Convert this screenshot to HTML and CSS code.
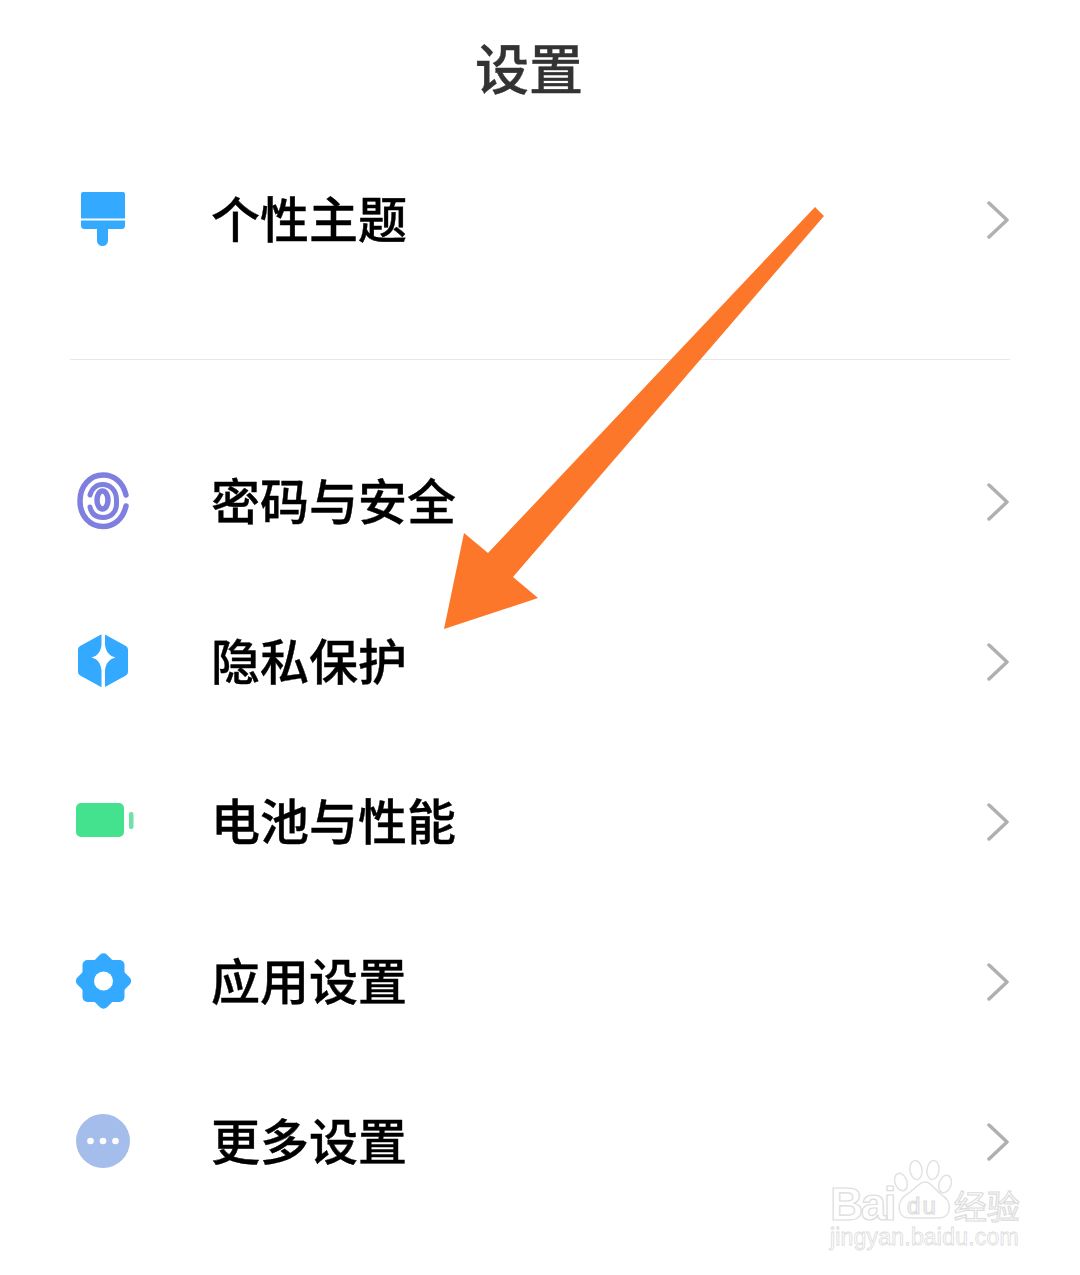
FILE: index.html
```html
<!DOCTYPE html>
<html lang="zh-CN">
<head>
  <meta charset="utf-8">
  <title>设置</title>
  <link rel="stylesheet" href="styles.css">
</head>
<body>
<main class="page">
  <header class="title-bar"><h1>设置</h1></header>

  <ul class="group">
    <li class="row">
      <svg class="icon" viewBox="0 0 66 66">
        <path fill="#33a9ff" d="M13 5h40a2 2 0 0 1 2 2v24.500H11V7a2 2 0 0 1 2-2z"/>
        <path fill="#33a9ff" d="M11 33.500h44v5a3.500 3.500 0 0 1-3.500 3.500H38v11.500a5.500 5.500 0 0 1-11 0V42H14.500a3.500 3.500 0 0 1-3.500-3.500z"/>
      </svg>
      <span class="label">个性主题</span>
      <svg class="chevron" viewBox="0 0 24 38"><path d="M3 2l18 17L3 36"/></svg>
    </li>
  </ul>

  <hr class="divider">

  <ul class="group">
    <li class="row">
      <svg class="icon" viewBox="0 0 66 66" fill="none" stroke="#7f7fe0" stroke-linecap="round">
        <path stroke-width="5.500" d="M56 26C53 13 44 6 33 6C20 6 10 17 10 32C10 47 20 57.500 33 57.500C44 57.500 53 50 56 37"/>
        <path stroke-width="5" d="M20 26C22 19 27 15.500 32.500 15.500C41 15.500 46.500 22 46.500 31V35C46.500 43 41 48.500 33 48.500C26 48.500 21.500 45 20 38"/>
        <ellipse stroke-width="5.500" cx="32.500" cy="31" rx="5.500" ry="9"/>
      </svg>
      <span class="label">密码与安全</span>
      <svg class="chevron" viewBox="0 0 24 38"><path d="M3 2l18 17L3 36"/></svg>
    </li>
    <li class="row">
      <svg class="icon" viewBox="0 0 66 66">
        <path fill="#33a9ff" stroke="#33a9ff" stroke-width="8" stroke-linejoin="round" d="M33 9L54 20.500V43L33 54.500L12 43V20.500z"/>
        <path fill="#fff" d="M31.500 3h3.500v13C36 23 39.500 27 45.500 28.500C39.500 30 36 34 35 41V60H31.500V41C30.500 34 27.500 30 21.500 28.500C27.500 27 30.500 23 31.500 16z"/>
      </svg>
      <span class="label">隐私保护</span>
      <svg class="chevron" viewBox="0 0 24 38"><path d="M3 2l18 17L3 36"/></svg>
    </li>
    <li class="row">
      <svg class="icon" viewBox="0 0 66 66">
        <rect fill="#44e28f" x="6" y="14" width="48" height="34" rx="5"/>
        <rect fill="#6fe2a8" x="59" y="23" width="4.500" height="17" rx="2"/>
      </svg>
      <span class="label">电池与性能</span>
      <svg class="chevron" viewBox="0 0 24 38"><path d="M3 2l18 17L3 36"/></svg>
    </li>
    <li class="row">
      <svg class="icon" viewBox="0 0 66 66">
        <rect fill="#33a9ff" x="12.500" y="11" width="42" height="42" rx="5"/>
        <rect fill="#33a9ff" x="12.500" y="11" width="42" height="42" rx="5" transform="rotate(45 33.500 32)"/>
        <circle fill="#fff" cx="33.500" cy="32" r="9.500"/>
      </svg>
      <span class="label">应用设置</span>
      <svg class="chevron" viewBox="0 0 24 38"><path d="M3 2l18 17L3 36"/></svg>
    </li>
    <li class="row">
      <svg class="icon" viewBox="0 0 66 66">
        <circle fill="#a5bdeb" cx="33" cy="32" r="27"/>
        <circle fill="#fff" cx="20.500" cy="32" r="3.300"/>
        <circle fill="#fff" cx="33" cy="32" r="3.300"/>
        <circle fill="#fff" cx="45.500" cy="32" r="3.300"/>
      </svg>
      <span class="label">更多设置</span>
      <svg class="chevron" viewBox="0 0 24 38"><path d="M3 2l18 17L3 36"/></svg>
    </li>
  </ul>
</main>

<!-- annotation drawn over the screenshot -->
<svg class="arrow" viewBox="0 0 1080 1275">
  <path fill="#fd772a" d="M815 207L824 216L513 577L538 598L444 629L464 533L488 553z"/>
</svg>

<!-- watermark -->
<div class="watermark">
  <div class="wm-logo">
    <svg class="wm-paw" viewBox="0 0 60 60" fill="none" stroke="#e2e2e2" stroke-width="1.500">
      <ellipse cx="8" cy="22" rx="6" ry="9" transform="rotate(-20 8 22)"/>
      <ellipse cx="23" cy="10" rx="6" ry="9.500" transform="rotate(-8 23 10)"/>
      <ellipse cx="40" cy="10" rx="6" ry="9.500" transform="rotate(8 40 10)"/>
      <ellipse cx="52" cy="24" rx="6" ry="9" transform="rotate(20 52 24)"/>
      <path d="M32 22C25 22 22 30 13 35C3 41 4 58 16 58H46C58 58 60 42 50 36C41 30 39 22 32 22z"/>
    </svg>
    <span class="wm-bai">Bai</span>
    <span class="wm-du">du</span>
    <span class="wm-jy">经验</span>
  </div>
  <div class="wm-url">jingyan.baidu.com</div>
</div>
</body>
</html>
```

FILE: styles.css
```css
* {
  box-sizing: border-box;
}
html,body {
  margin: 0;
  background: #ffffff;
}
body {
  font-family: "Noto Sans CJK SC", "Noto Sans", sans-serif;
  width: 1080px;
  height: 1275px;
  overflow: hidden;
  position: relative;
}
.page {
  padding: 0 70px;
}
.title-bar {
  height: 140px;
  display: flex;
  align-items: center;
  justify-content: center;
  padding-right: 22px;
  padding-bottom: 8px;
}
.title-bar h1 {
  margin: 0;
  font-size: 54px;
  font-weight: 500;
  color: #333333;
  -webkit-text-stroke: 0.4px #333333;
}
.group {
  list-style: none;
  margin: 0;
  padding: 0;
}
.row {
  height: 160px;
  display: flex;
  align-items: center;
}
.icon {
  width: 66px;
  height: 66px;
  flex: none;
}
.label {
  margin-left: 75px;
  margin-bottom: 7px;
  font-size: 49px;
  font-weight: 500;
  color: #000000;
  -webkit-text-stroke: 0.4px #000000;
  flex: 1;
}
.chevron {
  width: 24px;
  height: 38px;
  flex: none;
  fill: none;
  stroke: #b0b0b0;
  stroke-width: 3.5;
  stroke-linecap: round;
  stroke-linejoin: round;
}
.divider {
  margin: 59px 0 62px;
  border: 0;
  border-top: 1px solid #e8e8e8;
}
.arrow {
  position: absolute;
  top: 0;
  left: 0;
  width: 1080px;
  height: 1275px;
}
.watermark {
  position: absolute;
  left: 830px;
  top: 1158px;
  width: 200px;
  color: transparent;
  font-family: "Liberation Sans", sans-serif;
}
.wm-logo {
  position: relative;
  height: 64px;
  display: flex;
  align-items: flex-end;
}
.wm-bai,.wm-du,.wm-jy {
  -webkit-text-stroke: 1.2px #dcdcdc;
}
.wm-bai {
  font-size: 46px;
  line-height: 36px;
  font-weight: bold;
  letter-spacing: -2.500px;
}
.wm-du {
  font-size: 24px;
  line-height: 24px;
  letter-spacing: 2px;
  margin-left: 13px;
  margin-bottom: 4px;
}
.wm-jy {
  font-family: "Noto Sans CJK SC", sans-serif;
  font-size: 33px;
  line-height: 28px;
  margin-left: 16px;
  margin-bottom: 3px;
}
.wm-paw {
  position: absolute;
  left: 63px;
  top: 2px;
  width: 60px;
  height: 60px;
}
.wm-url {
  margin-top: 4px;
  font-size: 23px;
  line-height: 23px;
  letter-spacing: 0.2px;
  -webkit-text-stroke: 0.8px #dcdcdc;
  white-space: nowrap;
}
```
